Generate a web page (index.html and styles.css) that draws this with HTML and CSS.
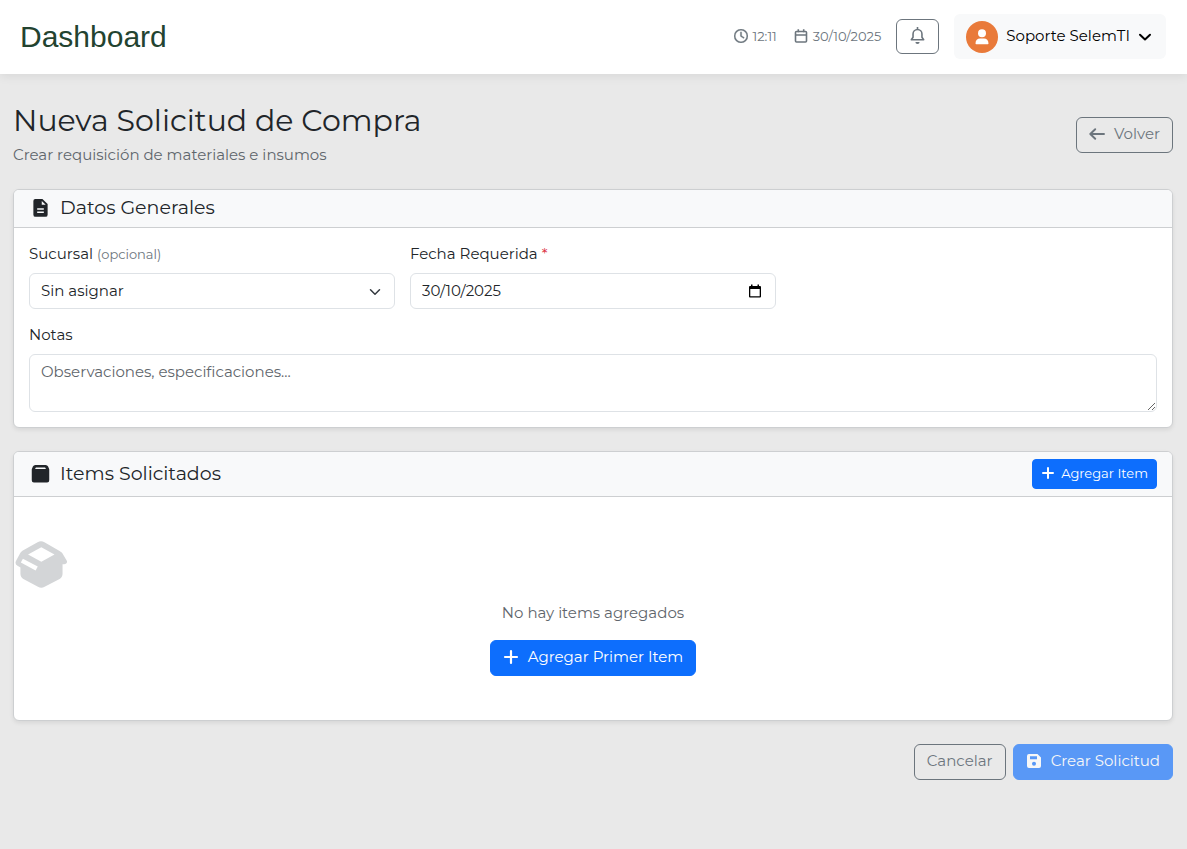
FILE: index.html
```html
<!DOCTYPE html>
<html lang="es">
<head>
<meta charset="utf-8">
<meta name="viewport" content="width=device-width, initial-scale=1">
<title>Nueva Solicitud de Compra</title>
<link rel="stylesheet" href="styles.css">
</head>
<body>
<header class="topbar">
  <div class="topbar-title">Dashboard</div>
  <div class="topbar-tools">
    <div class="status">
      <span class="status-item">
        <svg class="icon-sm" viewBox="0 0 512 512" fill="currentColor" aria-hidden="true"><path d="M464 256A208 208 0 1 1 48 256a208 208 0 1 1 416 0zM0 256a256 256 0 1 0 512 0A256 256 0 1 0 0 256zM232 120V256c0 8 4 15.500 10.700 20l96 64c11 7.400 25.900 4.400 33.300-6.700s4.400-25.900-6.700-33.300L280 243.200V120c0-13.300-10.700-24-24-24s-24 10.700-24 24z" stroke="currentColor" stroke-width="10"/></svg>
        <span>12:11</span>
      </span>
      <span class="status-item">
        <svg class="icon-sm" viewBox="0 0 14 14" fill="none" stroke="currentColor" stroke-width="1.600" aria-hidden="true"><rect x="1.500" y="2.500" width="11" height="10.500" rx="1"/><path d="M2 6h10M4.300 0.300v3M9.700 0.300v3"/></svg>
        <span>30/10/2025</span>
      </span>
    </div>
    <button class="btn btn-outline btn-bell" type="button" aria-label="Notificaciones">
      <svg class="icon-bell" viewBox="0 0 16 16" fill="none" stroke="currentColor" stroke-width="1.500" aria-hidden="true"><path d="M8 0v2M2.200 12h11.600L12.200 9.600V6.500a4.200 4.200 0 0 0-8.400 0v3.100z" stroke-linejoin="round"/><path d="M6 14h4a2 2 0 0 1-4 0z" fill="currentColor" stroke="none"/></svg>
    </button>
    <button class="user" type="button">
      <span class="avatar">
        <svg class="icon-user" viewBox="0 0 14 16" fill="currentColor" aria-hidden="true"><circle cx="7" cy="4.200" r="4"/><path d="M.5 14.500c0-3.200 2-5 4.500-5h4c2.500 0 4.500 1.800 4.500 5 0 .6-.3.800-.8.800H1.300c-.5 0-.8-.2-.8-.8z"/></svg>
      </span>
      <span class="user-name">Soporte SelemTI</span>
      <svg class="icon-sm" viewBox="0 0 14 14" fill="none" stroke="currentColor" stroke-width="2" stroke-linecap="round" stroke-linejoin="round" aria-hidden="true"><path d="M2 4.800l5 4.700 5-4.700"/></svg>
    </button>
  </div>
</header>

<main class="page">
  <div class="page-head">
    <div>
      <h1 class="page-title">Nueva Solicitud de Compra</h1>
      <p class="page-sub">Crear requisición de materiales e insumos</p>
    </div>
    <button class="btn btn-outline" type="button">
      <svg class="icon" viewBox="0 0 16 16" fill="none" stroke="currentColor" stroke-width="1.900" stroke-linecap="round" stroke-linejoin="round" aria-hidden="true"><path d="M15 8H1.500M6.200 3.200L1.300 8l4.900 4.800"/></svg>
      <span>Volver</span>
    </button>
  </div>

  <form class="form">
    <section class="card">
      <div class="card-head">
        <svg class="icon-head" viewBox="0 0 20 20" aria-hidden="true"><path d="M4.500 0H12l5.500 5.300V16.500a2.300 2.300 0 0 1-2.300 2.300H4.800a2.300 2.300 0 0 1-2.300-2.300V2a2 2 0 0 1 2-2z" fill="#212529"/><path d="M11.300 2v4h4.200z" fill="#f8f9fa"/><path d="M6.500 10.500h7M6.500 14h7" stroke="#f8f9fa" stroke-width="1.500"/></svg>
        <h2 class="card-title">Datos Generales</h2>
      </div>
      <div class="card-body">
        <div class="field">
          <label class="label" for="branch">Sucursal <small class="hint">(opcional)</small></label>
          <div class="control-wrap">
            <select class="control select" id="branch"><option>Sin asignar</option></select>
            <svg class="select-caret" viewBox="0 0 16 16" fill="none" stroke="#343a40" stroke-width="2" stroke-linecap="round" stroke-linejoin="round" aria-hidden="true"><path d="M2 5l6 6 6-6"/></svg>
          </div>
        </div>
        <div class="field">
          <label class="label" for="date">Fecha Requerida <span class="required">*</span></label>
          <div class="control-wrap">
            <input class="control date" id="date" type="text" value="30/10/2025">
            <button class="date-btn" type="button" aria-label="Abrir calendario">
              <svg class="icon-sm" viewBox="0 0 14 14" aria-hidden="true"><path d="M3 .5h1.500V2h5V.5H11V2h1a1 1 0 0 1 1 1v9.500a1 1 0 0 1-1 1H2a1 1 0 0 1-1-1V3a1 1 0 0 1 1-1h1zM2.300 5v7.200h9.400V5z" fill="#000" fill-rule="evenodd"/></svg>
            </button>
          </div>
        </div>
        <div class="field field-wide">
          <label class="label" for="notes">Notas</label>
          <textarea class="control notes" id="notes" rows="2" placeholder="Observaciones, especificaciones..."></textarea>
        </div>
      </div>
    </section>

    <section class="card">
      <div class="card-head card-head-tools">
        <svg class="icon-head" viewBox="0 0 20 20" aria-hidden="true"><path d="M4.600 0h10.800a3 3 0 0 1 2.600 1.700L19.200 4.500V16a2.300 2.300 0 0 1-2.300 2.300H3.100A2.300 2.300 0 0 1 .8 16V4.500L2 1.700A3 3 0 0 1 4.600 0z" fill="#212529"/><path d="M5.200 2.500h9.600l1 1.700H4.200z" fill="#f8f9fa"/></svg>
        <h2 class="card-title">Items Solicitados</h2>
        <button class="btn btn-primary btn-small" type="button">
          <svg class="icon-sm" viewBox="0 0 14 14" fill="none" stroke="currentColor" stroke-width="2" stroke-linecap="round" aria-hidden="true"><path d="M7 2v10M2 7h10"/></svg>
          <span>Agregar Item</span>
        </button>
      </div>
      <div class="empty">
        <svg class="empty-icon" viewBox="0 0 54 48" aria-hidden="true"><path d="M23.500 1.300a7 7 0 0 1 7 0L46 10.100l2.500 2 4.700 7.700c1.200 2.200-.4 4-2.700 4h-1.500v9.700a6 6 0 0 1-3 5.200l-15.300 8.100a7 7 0 0 1-6.800 0L9 38.700a6 6 0 0 1-3-5.200V27l-3-1.800a4 4 0 0 1-1.300-5.400l3.600-6.400A7 7 0 0 1 8 10z" fill="#d3d5d7"/><path d="M27.300 6.500l13.500 7.400-13.500 7.400-13.500-7.400z" fill="#fff"/><path d="M8.500 18l15.200 8-2.200 4.200L6.400 22z" fill="#fff"/></svg>
        <div class="empty-info">
          <p class="empty-text">No hay items agregados</p>
          <button class="btn btn-primary" type="button">
            <svg class="icon" viewBox="0 0 16 16" fill="none" stroke="currentColor" stroke-width="2.200" stroke-linecap="round" aria-hidden="true"><path d="M8 2v12M2 8h12"/></svg>
            <span>Agregar Primer Item</span>
          </button>
        </div>
      </div>
    </section>

    <div class="actions">
      <button class="btn btn-outline" type="button">Cancelar</button>
      <button class="btn btn-primary" type="submit" disabled>
        <svg class="icon" viewBox="0 0 16 16" fill="currentColor" fill-rule="evenodd" aria-hidden="true"><path d="M3 1h8.500L15 4.500V13a2 2 0 0 1-2 2H3a2 2 0 0 1-2-2V3a2 2 0 0 1 2-2zM4 3.300v3h7v-3zM8 8.800a2 2 0 1 0 0 4 2 2 0 0 0 0-4z"/></svg>
        <span>Crear Solicitud</span>
      </button>
    </div>
  </form>
</main>
</body>
</html>
```
FILE: styles.css
```css
* {
  box-sizing: border-box;
}

body {
  margin: 0;
  min-height: 100vh;
  background: #e9e9e9;
  color: #212529;
  font-family: Montserrat, Inter, "Open Sans", sans-serif;
  font-size: 15px;
  line-height: 22px;
}

button,
input,
select,
textarea {
  font: inherit;
  color: inherit;
}

h1,
h2,
p {
  margin: 0;
}

svg {
  display: block;
  flex: none;
}

.icon {
  width: 16px;
  height: 16px;
}

.icon-sm {
  width: 14px;
  height: 14px;
}

/* Top bar */
.topbar {
  display: flex;
  align-items: center;
  justify-content: space-between;
  padding: 14px 21px 15px 20px;
  background: #fff;
  box-shadow: 0 2px 10px rgba(0, 0, 0, 0.08);
}

.topbar-title {
  color: #234330;
  font-family: "Liberation Sans", Arial, sans-serif;
  font-size: 30px;
  line-height: 36px;
}

.topbar-tools {
  display: flex;
  align-items: center;
  gap: 15px;
}

.status {
  display: flex;
  gap: 17px;
  padding-bottom: 2px;
  color: #6c757d;
  font-size: 13px;
}

.status-item {
  display: flex;
  align-items: center;
  gap: 5px;
}

.user {
  display: flex;
  align-items: center;
  gap: 8px;
  height: 45px;
  padding: 0 14px 0 12px;
  border: 0;
  border-radius: 6px;
  background: #f8f9fa;
  color: #000;
}

.user-name {
  padding-bottom: 2px;
}

.avatar {
  display: flex;
  align-items: center;
  justify-content: center;
  width: 32px;
  height: 32px;
  border-radius: 50%;
  background: #e97a3a;
  color: #fff;
}

.icon-user {
  width: 14px;
  height: 16px;
}

.icon-bell {
  width: 17px;
  height: 17px;
}

/* Buttons */
.btn {
  display: inline-flex;
  align-items: center;
  justify-content: center;
  gap: 9px;
  height: 36px;
  padding: 0 12px 2px;
  border: 1px solid transparent;
  border-radius: 6px;
  white-space: nowrap;
}

.btn-outline {
  border-color: #6c757d;
  background: transparent;
  color: #6c757d;
}

.btn-primary {
  border-color: #0d6efd;
  background: #0d6efd;
  color: #fff;
}

.btn-primary:disabled {
  opacity: 0.65;
}

.btn-small {
  gap: 6px;
  height: 30px;
  padding: 0 8px 2px;
  border-radius: 4px;
  font-size: 13px;
}

.btn-bell {
  width: 43px;
  height: 35px;
}

/* Page */
.page {
  padding: 28px 14px 28px 13px;
}

.page-head {
  display: flex;
  align-items: center;
  justify-content: space-between;
  margin-bottom: 21px;
}

.page-title {
  font-size: 30px;
  font-weight: 400;
  line-height: 38px;
}

.page-sub {
  padding: 4px 0 2px;
  color: #5f666c;
}

.form {
  display: flex;
  flex-direction: column;
  gap: 23px;
}

.card {
  border: 1px solid #cdcfd1;
  border-radius: 6px;
  background: #fff;
  box-shadow: 0 2px 4px rgba(0, 0, 0, 0.08);
}

.card-head {
  display: flex;
  align-items: center;
  gap: 10px;
  padding: 7px 15px 8px 17px;
  border-bottom: 1px solid #cdcfd1;
  border-radius: 5px 5px 0 0;
  background: #f8f9fa;
}

.card-head-tools {
  padding-bottom: 7px;
}

.card-head-tools .btn {
  margin-left: auto;
}

.icon-head {
  width: 19px;
  height: 19px;
}

.card-title {
  font-size: 19px;
  font-weight: 400;
  line-height: 22px;
}

.card-body {
  display: grid;
  grid-template-columns: repeat(3, 1fr);
  gap: 15px;
  padding: 15px;
}

/* Fields */
.field {
  display: flex;
  flex-direction: column;
  gap: 8px;
}

.field-wide {
  grid-column: 1 / -1;
}

.hint {
  color: #6c757d;
  font-size: 13px;
}

.required {
  color: #dc3545;
}

.control-wrap {
  position: relative;
}

.control {
  display: block;
  width: 100%;
  height: 36px;
  padding: 0 11px;
  border: 1px solid #dee2e6;
  border-radius: 6px;
  background: #fff;
}

.select {
  appearance: none;
}

.date {
  padding-bottom: 2px;
}

.select-caret {
  position: absolute;
  top: 13px;
  right: 14px;
  width: 12px;
  height: 12px;
  pointer-events: none;
}

.date-btn {
  position: absolute;
  top: 11px;
  right: 14px;
  padding: 0;
  border: 0;
  background: none;
}

.notes {
  height: 58px;
  padding: 6px 11px;
  resize: vertical;
}

.notes::placeholder {
  color: #5f666c;
}

/* Empty list */
.empty {
  display: flex;
  flex-direction: column;
  gap: 14px;
  padding: 44px 0;
}

.empty-icon {
  width: 54px;
  height: 47px;
}

.empty-info {
  display: flex;
  flex-direction: column;
  align-items: center;
  gap: 16px;
}

.empty-text {
  color: #5f666c;
}

.actions {
  display: flex;
  justify-content: flex-end;
  gap: 7px;
}
```
